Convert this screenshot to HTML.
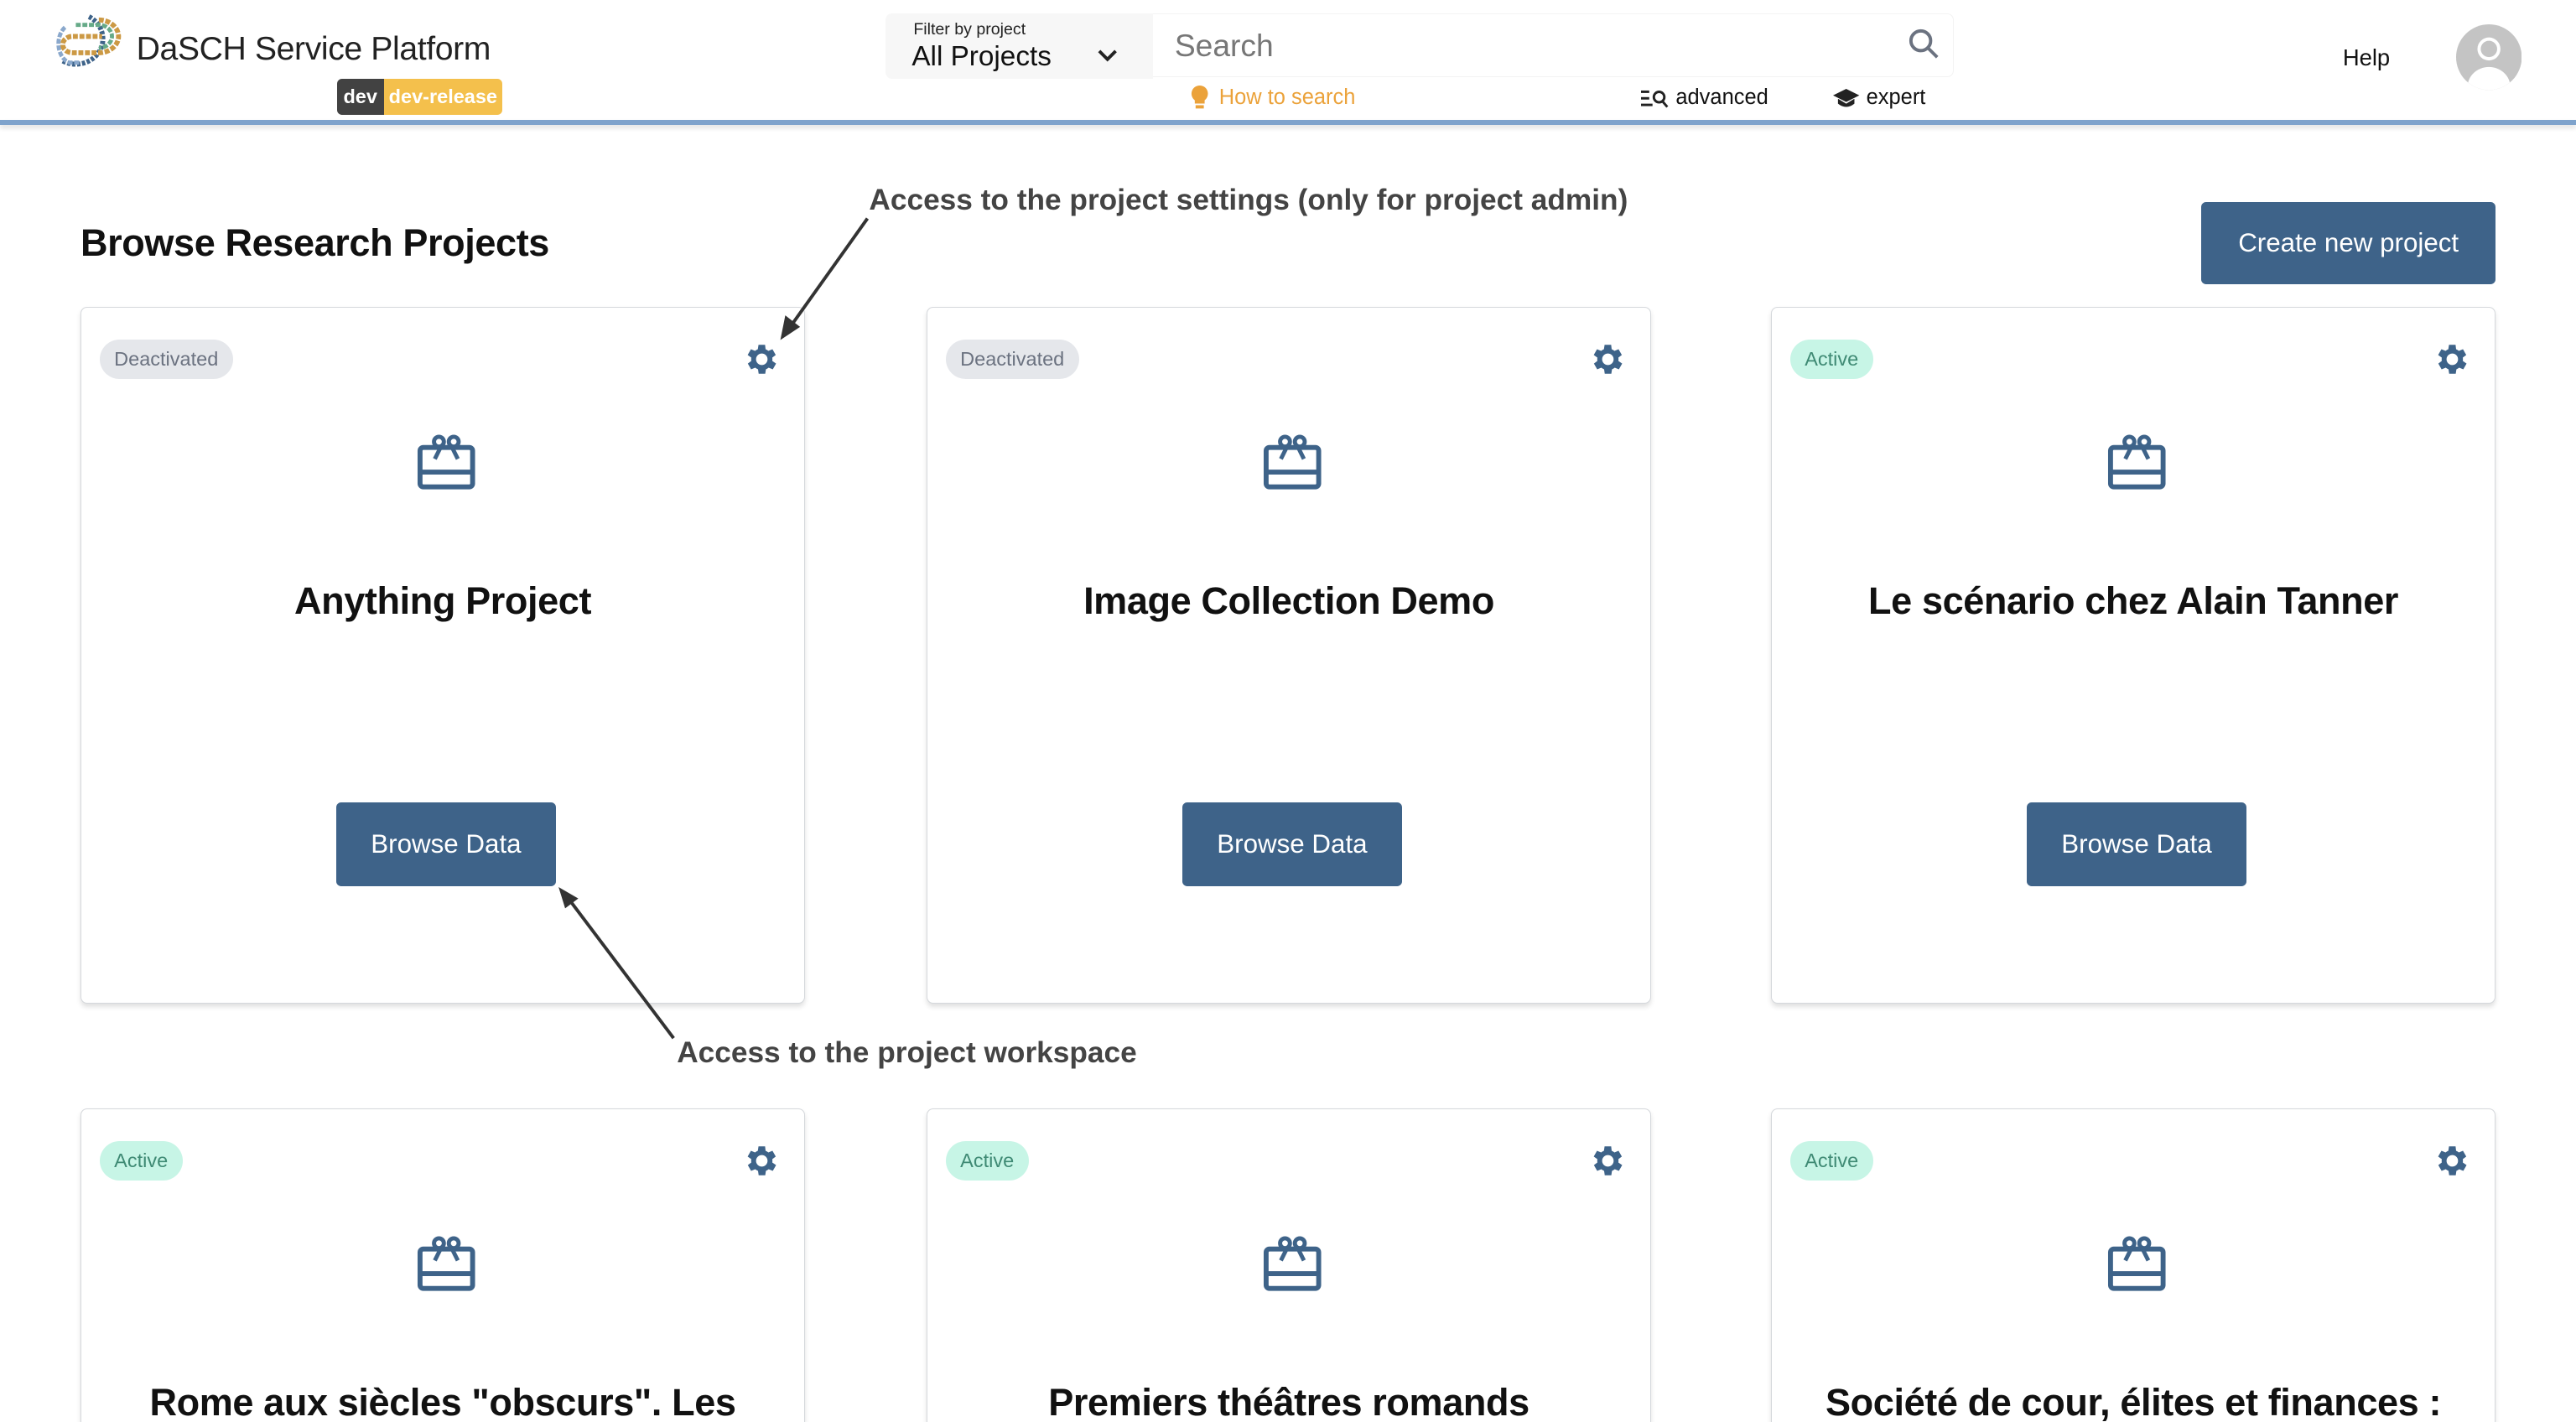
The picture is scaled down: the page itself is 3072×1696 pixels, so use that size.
<!DOCTYPE html>
<html><head><meta charset="utf-8">
<style>
html,body{margin:0;padding:0;overflow:hidden;height:1696px;width:3072px}
#w{zoom:1.9592;width:1568px;height:866px;overflow:hidden;background:#fff;font-family:"Liberation Sans",sans-serif;position:relative;color:#222}
.a{position:absolute}
.hdr{left:0;top:0;width:1568px;height:73px;background:#fff}
.line{left:0;top:73px;width:1568px;height:3px;background:#7fa3cc;box-shadow:0 2px 3px rgba(0,0,0,.12)}
.card{position:absolute;width:440px;height:423px;border:1px solid #d5d8dc;border-radius:4px;box-shadow:0 2px 3px rgba(0,0,0,.12);background:#fff}
.card.r2{height:190px;border-bottom:none;border-radius:4px 4px 0 0}
.chip{position:absolute;left:11px;top:19px;height:24px;line-height:24px;padding:0 9px;border-radius:12px;font-size:12px}
.de{background:#e5e7eb;color:#6b7280}
.ac{background:#c7f5e6;color:#3f8a74}
.gear{position:absolute;left:401px;top:19px}
.ic{position:absolute;left:204px;top:77px}
.tt{position:absolute;left:0;width:440px;top:165px;text-align:center;font-size:23px;font-weight:bold;color:#111;white-space:nowrap;letter-spacing:-0.2px}
.btn{position:absolute;left:155px;top:301px;width:134px;height:51px;background:#3e6389;color:#fff;font-size:16px;line-height:51px;text-align:center;border-radius:3px}
.ann{font-size:18px;font-weight:bold;color:#444;white-space:nowrap}
</style></head><body><div id="w">
<div class="a hdr"></div>
<svg class="a" style="left:32px;top:7px" width="42" height="36" viewBox="0 0 42 36">
<path d="M22 3 A16 15 0 1 1 6 30" fill="none" stroke="#3e6389" stroke-width="3" stroke-dasharray="2 1"/>
<path d="M28 5 A12 10 0 0 1 28 25 L12 25 A6 5 0 0 1 12 15 L30 15" fill="none" stroke="#c94" stroke-width="3" stroke-dasharray="3 1"/>
<path d="M14 8 L28 8 A8 7 0 0 1 28 22" fill="none" stroke="#6a8" stroke-width="2.5" stroke-dasharray="3 1"/>
<path d="M16 31 L10 31 A9 12 0 0 1 8 9" fill="none" stroke="#8aa8cc" stroke-width="2.5" stroke-dasharray="3 1"/>
</svg>
<div class="a" style="left:83px;top:19px;font-size:20px;color:#222;letter-spacing:-0.2px">DaSCH Service Platform</div>
<div class="a" style="left:205px;top:48px;height:22px;border-radius:3px;overflow:hidden;display:flex;font-size:12px;font-weight:bold;color:#fff;line-height:22px">
<span style="background:#424242;padding:0 4px">dev</span><span style="background:#f4c04c;padding:0 3px">dev-release</span></div>
<div class="a" style="left:539px;top:8px;width:163px;height:40px;background:#f7f7f7;border-radius:4px 0 0 4px"></div>
<div class="a" style="left:556px;top:12px;font-size:10px;color:#222">Filter by project</div>
<div class="a" style="left:555px;top:25px;font-size:17px;color:#111">All Projects</div>
<svg class="a" style="left:667px;top:29px" width="14" height="10" viewBox="0 0 14 10"><path d="M2 2 L7 7 L12 2" fill="none" stroke="#222" stroke-width="2"/></svg>
<div class="a" style="left:702px;top:8px;width:487px;height:38px;border:1px solid #f3f3f3;border-left:none;border-radius:0 4px 4px 0"></div>
<div class="a" style="left:715px;top:17px;font-size:19px;color:#777">Search</div>
<svg class="a" style="left:1160px;top:16px" width="22" height="22" viewBox="0 0 22 22"><circle cx="9" cy="9" r="6" fill="none" stroke="#6b7280" stroke-width="2"/><path d="M13 13 L19 19" stroke="#6b7280" stroke-width="2"/></svg>
<svg class="a" style="left:723px;top:51px" width="14" height="16" viewBox="0 0 14 16"><path d="M7 1 A5 5 0 0 1 10 10 L10 12 L4 12 L4 10 A5 5 0 0 1 7 1Z" fill="#eba23a"/><rect x="4.5" y="13" width="5" height="2" fill="#eba23a"/></svg>
<div class="a" style="left:742px;top:52px;font-size:13px;color:#eba23a">How to search</div>
<svg class="a" style="left:999px;top:54px" width="17" height="12" viewBox="0 0 17 12"><rect x="0" y="1" width="5" height="1.5" fill="#222"/><rect x="0" y="5" width="5" height="1.5" fill="#222"/><rect x="0" y="9" width="7" height="1.5" fill="#222"/><circle cx="11" cy="5" r="3.2" fill="none" stroke="#222" stroke-width="1.5"/><path d="M13 7.5 L16 11" stroke="#222" stroke-width="1.5"/></svg>
<div class="a" style="left:1020px;top:52px;font-size:13px;color:#111">advanced</div>
<svg class="a" style="left:1116px;top:53px" width="17" height="14" viewBox="0 0 17 14"><path d="M8 1 L16 5 L8 9 L0 5Z" fill="#222"/><path d="M3 7 L3 10 Q8 14 13 10 L13 7 L8 10Z" fill="#222"/></svg>
<div class="a" style="left:1136px;top:52px;font-size:13px;color:#111">expert</div>
<div class="a" style="left:1426px;top:27px;font-size:14px;color:#111">Help</div>
<svg class="a" style="left:1495px;top:15px" width="40" height="40" viewBox="0 0 40 40"><defs><clipPath id="c"><circle cx="20" cy="20" r="20"/></clipPath></defs><circle cx="20" cy="20" r="20" fill="#c4c4c4"/><g clip-path="url(#c)" fill="#fff"><circle cx="20" cy="15" r="7"/><ellipse cx="20" cy="38" rx="13" ry="12"/></g><circle cx="20" cy="15" r="5" fill="#c4c4c4"/></svg>
<div class="a line"></div>

<div class="a" style="left:49px;top:135px;font-size:23px;font-weight:bold;color:#111;letter-spacing:-0.2px">Browse Research Projects</div>
<div class="a" style="left:1340px;top:123px;width:179px;height:50px;background:#3e6389;color:#fff;font-size:16px;line-height:50px;text-align:center;border-radius:3px">Create new project</div>

<svg width="0" height="0" style="position:absolute"><defs>
<g id="gear"><path fill="#3e6389" d="M19.4 13a7.5 7.5 0 0 0 0-2l2.1-1.6-2-3.5-2.5 1a7 7 0 0 0-1.7-1L15 3.2h-4l-.4 2.7a7 7 0 0 0-1.7 1l-2.5-1-2 3.5L6.6 11a7.5 7.5 0 0 0 0 2l-2.1 1.6 2 3.5 2.5-1a7 7 0 0 0 1.7 1l.4 2.7h4l.4-2.7a7 7 0 0 0 1.7-1l2.5 1 2-3.5zM13 15.5a3.5 3.5 0 1 1 0-7 3.5 3.5 0 0 1 0 7z"/></g>
<g id="ic" fill="none" stroke="#3e6389" stroke-width="3"><rect x="2" y="8" width="32" height="24" rx="2"/><path d="M2 23 H34"/><circle cx="13.5" cy="4.5" r="3" stroke-width="2.5"/><circle cx="22.5" cy="4.5" r="3" stroke-width="2.5"/><path d="M15 7 L11 15 M21 7 L25 15" stroke-width="2.5"/></g>
</defs></svg>

<div class="card" style="left:49px;top:187px"><div class="chip de">Deactivated</div><svg class="gear" width="26" height="26" viewBox="0 0 26 26"><use href="#gear"/></svg><svg class="ic" width="36" height="34" viewBox="0 0 36 34"><use href="#ic"/></svg><div class="tt">Anything Project</div><div class="btn">Browse Data</div></div>
<div class="card" style="left:564px;top:187px"><div class="chip de">Deactivated</div><svg class="gear" width="26" height="26" viewBox="0 0 26 26"><use href="#gear"/></svg><svg class="ic" width="36" height="34" viewBox="0 0 36 34"><use href="#ic"/></svg><div class="tt">Image Collection Demo</div><div class="btn">Browse Data</div></div>
<div class="card" style="left:1078px;top:187px"><div class="chip ac">Active</div><svg class="gear" width="26" height="26" viewBox="0 0 26 26"><use href="#gear"/></svg><svg class="ic" width="36" height="34" viewBox="0 0 36 34"><use href="#ic"/></svg><div class="tt">Le scénario chez Alain Tanner</div><div class="btn">Browse Data</div></div>

<div class="card r2" style="left:49px;top:675px"><div class="chip ac">Active</div><svg class="gear" width="26" height="26" viewBox="0 0 26 26"><use href="#gear"/></svg><svg class="ic" width="36" height="34" viewBox="0 0 36 34"><use href="#ic"/></svg><div class="tt">Rome aux siècles "obscurs". Les</div></div>
<div class="card r2" style="left:564px;top:675px"><div class="chip ac">Active</div><svg class="gear" width="26" height="26" viewBox="0 0 26 26"><use href="#gear"/></svg><svg class="ic" width="36" height="34" viewBox="0 0 36 34"><use href="#ic"/></svg><div class="tt">Premiers théâtres romands</div></div>
<div class="card r2" style="left:1078px;top:675px"><div class="chip ac">Active</div><svg class="gear" width="26" height="26" viewBox="0 0 26 26"><use href="#gear"/></svg><svg class="ic" width="36" height="34" viewBox="0 0 36 34"><use href="#ic"/></svg><div class="tt">Société de cour, élites et finances :</div></div>

<div class="a ann" style="left:529px;top:112px">Access to the project settings (only for project admin)</div>
<div class="a ann" style="left:412px;top:631px">Access to the project workspace</div>
<svg class="a" style="left:0;top:0" width="1568" height="866" viewBox="0 0 1568 866">
<path d="M528 133 L481 199" stroke="#333" stroke-width="2"/><path d="M475 207 L478 192 L487 199Z" fill="#333"/>
<path d="M410 632 L346 547" stroke="#333" stroke-width="2"/><path d="M340 540 L352 547 L344 553Z" fill="#333"/>
</svg>
</div></body></html>
